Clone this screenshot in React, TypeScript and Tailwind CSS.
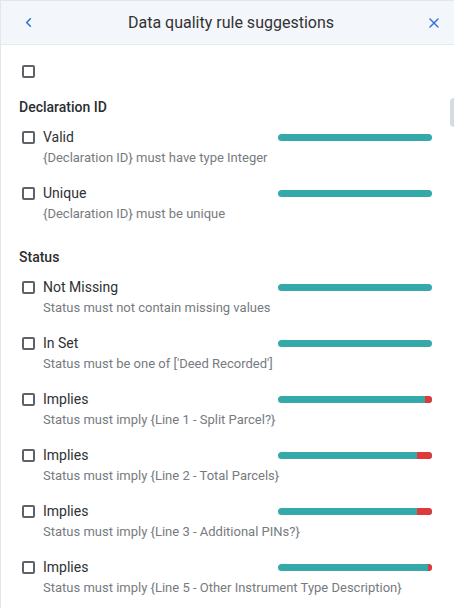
import { ChevronLeft, X } from "lucide-react";

type Rule = {
  name: string;
  text: string;
  fail: number;
};

type Section = {
  title: string;
  rules: Rule[];
};

const sections: Section[] = [
  {
    title: "Declaration ID",
    rules: [
      { name: "Valid", text: "{Declaration ID} must have type Integer", fail: 0 },
      { name: "Unique", text: "{Declaration ID} must be unique", fail: 0 },
    ],
  },
  {
    title: "Status",
    rules: [
      { name: "Not Missing", text: "Status must not contain missing values", fail: 0 },
      { name: "In Set", text: "Status must be one of ['Deed Recorded']", fail: 0 },
      { name: "Implies", text: "Status must imply {Line 1 - Split Parcel?}", fail: 7 },
      { name: "Implies", text: "Status must imply {Line 2 - Total Parcels}", fail: 15 },
      { name: "Implies", text: "Status must imply {Line 3 - Additional PINs?}", fail: 15 },
      {
        name: "Implies",
        text: "Status must imply {Line 5 - Other Instrument Type Description}",
        fail: 4,
      },
    ],
  },
];

function Checkbox() {
  return <span className="block h-[13px] w-[13px] shrink-0 rounded-[2px] border-2 border-[#5f6368] bg-white" />;
}

function Bar({ fail }: { fail: number }) {
  return (
    <div className="flex h-[7px] w-[154px] overflow-hidden rounded-full bg-[#35a9a9]">
      <div className="flex-1" />
      {fail > 0 && <div className="bg-[#e0393b]" style={{ width: fail }} />}
    </div>
  );
}

export default function App() {
  return (
    <div
      className="relative h-[608px] w-[454px] overflow-hidden border-l border-t border-[#e3e6ea] bg-white text-[#2f3133]"
      style={{ fontFamily: "Roboto, 'Noto Sans', sans-serif" }}
    >
      <div className="flex h-[44px] items-center justify-between border-b border-[#e6e9ee] bg-[#f3f6fb] pl-[20px] pr-[12px]">
        <ChevronLeft className="h-[15px] w-[15px] text-[#2f6fe0]" strokeWidth={2.5} />
        <h1 className="text-[16px] text-[#333]">Data quality rule suggestions</h1>
        <X className="h-[16px] w-[16px] text-[#2f6fe0]" strokeWidth={2} />
      </div>

      <div className="pl-[18px] pr-[21px] pt-[20px]">
        <div className="pl-[3px]">
          <Checkbox />
        </div>
        {sections.map((section, s) => (
          <div key={section.title} className={s === 0 ? "mt-[20px]" : "mt-[26px]"}>
            <h2 className="text-[14px] font-medium leading-[18px] text-[#2b2d30]">{section.title}</h2>
            <div className="mt-[12px] flex flex-col gap-[18px] pl-[3px]">
              {section.rules.map((rule, i) => (
                <div key={i}>
                  <div className="flex items-center gap-[8px] pr-[1px]">
                    <Checkbox />
                    <span className="flex-1 text-[14px] leading-[18px] text-[#2f3133]">{rule.name}</span>
                    <Bar fail={rule.fail} />
                  </div>
                  <div className="ml-[21px] mt-[4px] whitespace-nowrap text-[13px] leading-[16px] text-[#777b80]">
                    {rule.text}
                  </div>
                </div>
              ))}
            </div>
          </div>
        ))}
      </div>

      <div className="absolute right-0 top-[97px] h-[29px] w-[4px] rounded-l bg-[#d5dbe5]" />
    </div>
  );
}
